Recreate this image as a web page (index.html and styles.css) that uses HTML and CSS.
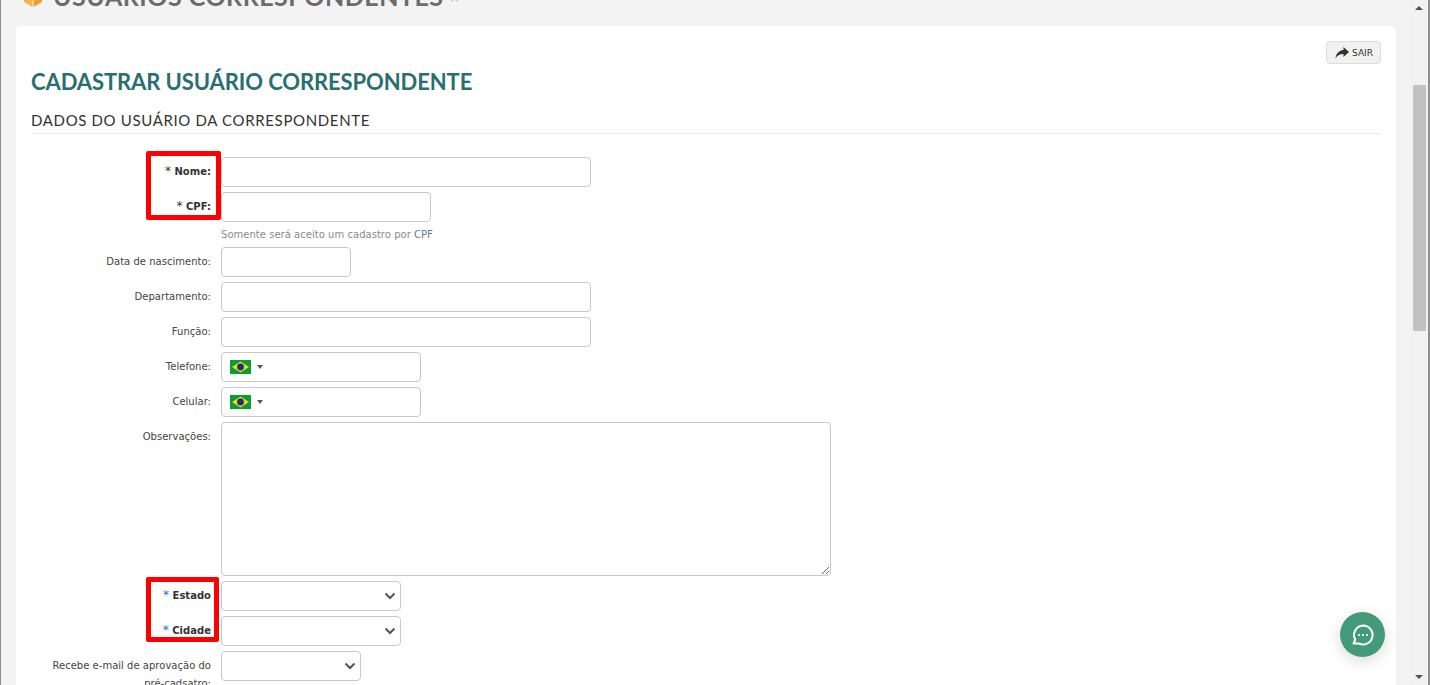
FILE: index.html
```html
<!DOCTYPE html>
<html lang="pt-BR">
<head>
    <meta charset="UTF-8">
    <title>Usuários Correspondentes</title>
    <link rel="stylesheet" href="styles.css">
</head>
<body>
    <div class="window">
        <div class="page">
            <!-- Title of the module, scrolled partly out of view -->
            <div class="page-top">
                <svg class="box-icon" width="22" height="22" viewBox="0 0 22 22">
                    <path d="M11 1 20 5.500 11 10 2 5.500Z" fill="#f7c27a"/>
                    <path d="M2 7v8l8.500 5v-9z" fill="#f6b44e"/>
                    <path d="M20 7v8l-8.500 5v-9z" fill="#f0a030"/>
                </svg>
                <span class="page-title">USUÁRIOS CORRESPONDENTES</span>
                <span class="page-arrows">»</span>
            </div>

            <div class="card">
                <div class="card-actions">
                    <a class="btn-exit" href="#">
                        <svg width="14" height="12" viewBox="0 0 14 12"><path d="M8.500 0 14 5 8.500 10V7C5 7 2.500 8 .5 11.500 1 7 3.500 3.500 8.500 3z" fill="#333"/></svg>
                        SAIR
                    </a>
                </div>
                <h1 class="heading">CADASTRAR USUÁRIO CORRESPONDENTE</h1>
                <h2 class="subheading">DADOS DO USUÁRIO DA CORRESPONDENTE</h2>

                <form class="form">
                    <div class="row">
                        <label class="label label-strong"><span class="star">*</span> Nome:</label>
                        <input class="field w-370" type="text">
                    </div>
                    <div class="row">
                        <label class="label label-strong"><span class="star">*</span> CPF:</label>
                        <input class="field w-210" type="text">
                    </div>
                    <p class="hint">Somente será aceito um cadastro por <span class="hint-link">CPF</span></p>
                    <div class="row">
                        <label class="label">Data de nascimento:</label>
                        <input class="field w-130" type="text">
                    </div>
                    <div class="row">
                        <label class="label">Departamento:</label>
                        <input class="field w-370" type="text">
                    </div>
                    <div class="row">
                        <label class="label">Função:</label>
                        <input class="field w-370" type="text">
                    </div>
                    <div class="row">
                        <label class="label">Telefone:</label>
                        <div class="field w-200 phone">
                            <svg class="flag" width="21" height="14" viewBox="0 0 21 14">
                                <rect width="21" height="14" fill="#0a9b3c"/>
                                <path d="M10.500 1.500 19 7 10.500 12.500 2 7z" fill="#f5d90a"/>
                                <circle cx="10.500" cy="7" r="3.400" fill="#1c2f80"/>
                            </svg>
                            <span class="caret"></span>
                        </div>
                    </div>
                    <div class="row">
                        <label class="label">Celular:</label>
                        <div class="field w-200 phone">
                            <svg class="flag" width="21" height="14" viewBox="0 0 21 14">
                                <rect width="21" height="14" fill="#0a9b3c"/>
                                <path d="M10.500 1.500 19 7 10.500 12.500 2 7z" fill="#f5d90a"/>
                                <circle cx="10.500" cy="7" r="3.400" fill="#1c2f80"/>
                            </svg>
                            <span class="caret"></span>
                        </div>
                    </div>
                    <div class="row">
                        <label class="label">Observações:</label>
                        <textarea class="field w-610 notes"></textarea>
                    </div>
                    <div class="row">
                        <label class="label label-strong"><span class="star star-blue">*</span> Estado</label>
                        <select class="field w-180"><option></option></select>
                    </div>
                    <div class="row">
                        <label class="label label-strong"><span class="star star-blue">*</span> Cidade</label>
                        <select class="field w-180"><option></option></select>
                    </div>
                    <div class="row">
                        <label class="label">Recebe e-mail de aprovação do pré-cadsatro:</label>
                        <select class="field w-140"><option></option></select>
                    </div>

                    <!-- Red marks drawn over the screenshot -->
                    <div class="mark mark-top"></div>
                    <div class="mark mark-bottom"></div>
                </form>
            </div>
        </div>

        <div class="scrollbar">
            <span class="scroll-arrow scroll-up"></span>
            <div class="scroll-track"><div class="scroll-thumb"></div></div>
            <span class="scroll-arrow scroll-down"></span>
        </div>

        <a class="chat" href="#">
            <svg width="24" height="24" viewBox="0 0 24 24" fill="none" stroke="#fff" stroke-width="2">
                <path d="M12 2.500a9.500 9.500 0 1 1-4.200 18H2.500l1.800-3.800A9.500 9.500 0 0 1 12 2.500z" stroke-linejoin="round"/>
                <circle cx="8" cy="12" r="1.100" fill="#fff" stroke="none"/>
                <circle cx="12" cy="12" r="1.100" fill="#fff" stroke="none"/>
                <circle cx="16" cy="12" r="1.100" fill="#fff" stroke="none"/>
            </svg>
        </a>
    </div>
</body>
</html>
```

FILE: styles.css
```css
/* General Styles */
html, body {
    height: 100%;
    margin: 0;
    overflow: hidden;
}

body {
    font-family: 'DejaVu Sans', Verdana, sans-serif;
    background-color: #f3f3f3;
}

.window {
    position: relative;
    display: flex;
    height: 685px;
    border-left: 1px solid #8f8f8f;
    border-right: 2px solid #8f8f8f;
    box-sizing: border-box;
    overflow: hidden;
}

.page {
    flex: 1;
    min-width: 0;
    padding: 0 15px;
}

/* Module title */
.page-top {
    display: flex;
    align-items: center;
    height: 36px;
    margin-top: -22px;
    margin-bottom: 12px;
    padding-left: 6px;
}

.box-icon {
    margin-top: 3px;
    margin-right: 9px;
}

.page-title {
    font-family: 'Lato', sans-serif;
    font-size: 25px;
    font-weight: 700;
    letter-spacing: .5px;
    color: #6b6b6b;
}

.page-arrows {
    margin-left: 6px;
    font-size: 20px;
    color: #bbb;
}

/* Card */
.card {
    position: relative;
    height: 700px;
    padding: 15px 15px 0;
    background-color: #fff;
    border-radius: 5px;
}

.card-actions {
    display: flex;
    justify-content: flex-end;
    height: 23px;
}

.btn-exit {
    display: flex;
    align-items: center;
    gap: 3px;
    height: 23px;
    padding: 0 7px 0 8px;
    box-sizing: border-box;
    font-size: 9px;
    color: #333;
    text-decoration: none;
    background-color: #f1f1f1;
    border: 1px solid #ddd;
    border-radius: 4px;
}

.heading {
    margin: 4px 0 0;
    font-family: 'Lato', sans-serif;
    font-size: 22px;
    line-height: 28px;
    font-weight: 700;
    letter-spacing: -.1px;
    color: #2a6f6f;
}

.subheading {
    margin: 15px 0 0;
    padding-bottom: 4px;
    font-family: 'Lato', sans-serif;
    font-size: 15px;
    line-height: 18px;
    font-weight: 400;
    letter-spacing: .65px;
    color: #333;
    border-bottom: 1px solid #eaeaea;
}

/* Form */
.form {
    padding-top: 23px;
}

.row {
    display: flex;
    align-items: flex-start;
    gap: 10px;
    margin-bottom: 5px;
}

.label {
    flex: none;
    width: 180px;
    padding-top: 6px;
    font-size: 10px;
    line-height: 18px;
    letter-spacing: .02px;
    text-align: right;
    color: #444;
}

.label-strong {
    font-weight: 700;
    color: #333;
}

.star {
    font-size: 12px;
    line-height: 1;
    font-weight: 400;
}

.star-blue {
    color: #1b6fc2;
}

.field {
    display: block;
    flex: none;
    height: 30px;
    margin: 0;
    padding: 4px 8px;
    box-sizing: border-box;
    font-family: inherit;
    font-size: 11px;
    background-color: #fff;
    border: 1px solid #c8c8c8;
    border-radius: 4px;
}

select.field {
    appearance: none;
    background-image: url("data:image/svg+xml,%3Csvg xmlns='http://www.w3.org/2000/svg' width='12' height='8' viewBox='0 0 12 8'%3E%3Cpath d='M1.500 1.500 6 6l4.500-4.500' fill='none' stroke='%23555' stroke-width='2'/%3E%3C/svg%3E");
    background-repeat: no-repeat;
    background-position: right 4px center;
}

.w-130 { width: 130px; }
.w-140 { width: 140px; }
.w-180 { width: 180px; }
.w-200 { width: 200px; }
.w-210 { width: 210px; }
.w-370 { width: 370px; }
.w-610 { width: 610px; }

.notes {
    height: 154px;
}

.hint {
    margin: -2px 0 2px 190px;
    font-size: 10px;
    line-height: 20px;
    letter-spacing: .03px;
    color: #8a8a8a;
}

.hint-link {
    color: #5d7a9c;
}

.phone {
    display: flex;
    align-items: center;
    padding-left: 8px;
}

.caret {
    margin-left: 6px;
    border-top: 4px solid #555;
    border-left: 3px solid transparent;
    border-right: 3px solid transparent;
}

/* Red marks */
.mark {
    position: absolute;
    border: 5px solid #f00;
    border-radius: 2px;
    box-sizing: border-box;
}

.mark-top {
    left: 130px;
    top: 125px;
    width: 75px;
    height: 69px;
}

.mark-bottom {
    left: 130px;
    top: 551px;
    width: 73px;
    height: 65px;
}

/* Fake scrollbar */
.scrollbar {
    display: flex;
    flex-direction: column;
    flex: none;
    width: 17px;
    background-color: #f1f1f1;
}

.scroll-arrow {
    flex: none;
    width: 0;
    margin: 6px 4px;
    border-left: 4px solid transparent;
    border-right: 4px solid transparent;
}

.scroll-up {
    border-bottom: 4px solid #505050;
}

.scroll-down {
    border-top: 4px solid #505050;
}

.scroll-track {
    flex: 1;
    padding-top: 69px;
}

.scroll-thumb {
    height: 246px;
    margin: 0 2px;
    background-color: #c1c1c1;
}

/* Chat button */
.chat {
    position: absolute;
    right: 43px;
    bottom: 28px;
    display: flex;
    align-items: center;
    justify-content: center;
    width: 45px;
    height: 45px;
    background-color: #429a78;
    border-radius: 50%;
    box-shadow: 0 4px 16px rgba(0, 0, 0, .15);
}
```
